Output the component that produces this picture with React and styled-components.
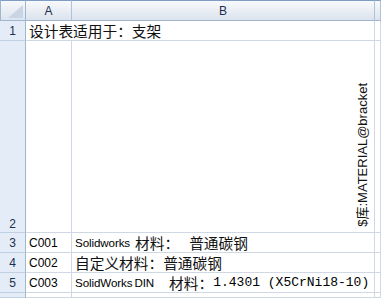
import React from "react";
import styled, { createGlobalStyle } from "styled-components";

const Global = createGlobalStyle`
  html, body {
    margin: 0;
    padding: 0;
    background: #ffffff;
  }
`;

const Sheet = styled.div`
  display: grid;
  grid-template-columns: 26px 46px 303px 1fr;
  grid-template-rows: 21px 20px 192px 20px 20px 20px 1fr;
  width: 381px;
  height: 298px;
  overflow: hidden;
  background: #ffffff;
  font-family: "Liberation Sans", Arial, sans-serif;
  color: #000000;
`;

const HeadBase = styled.div`
  box-sizing: border-box;
  display: flex;
  align-items: center;
  justify-content: center;
  font-size: 12px;
  color: #1c2f4d;
`;

const Corner = styled(HeadBase)`
  background: linear-gradient(#f6f8fb, #dde4ee);
  border-top: 1px solid #7e9cc4;
  border-left: 1px solid #9eb6ce;
  border-right: 1px solid #9eb6ce;
  border-bottom: 1px solid #9eb6ce;
  align-items: flex-end;
  justify-content: flex-end;
  padding: 0 2px 2px 0;
`;

const ColHead = styled(HeadBase)`
  background: linear-gradient(#f7f9fc, #dce3ed);
  border-top: 1px solid #7e9cc4;
  border-bottom: 1px solid #9eb6ce;
  border-right: 1px solid #b0c2d8;
`;

const RowHead = styled(HeadBase)`
  background: #e4ecf7;
  border-right: 1px solid #9eb6ce;
  border-bottom: 1px solid #c0cfe2;
  align-items: ${(p) => (p.$bottom ? "flex-end" : "center")};
  padding-bottom: ${(p) => (p.$bottom ? "1px" : "0")};
`;

const Cell = styled.div`
  box-sizing: border-box;
  display: flex;
  align-items: center;
  padding-left: 3px;
  white-space: nowrap;
  overflow: hidden;
  grid-column: ${(p) => (p.$span ? `span ${p.$span}` : "auto")};
  border-right: 1px solid #d0d7e5;
  border-bottom: 1px solid #d0d7e5;
  font-size: 12px;
`;

const TallCell = styled(Cell)`
  align-items: flex-end;
  justify-content: flex-end;
  padding: 0 4px 5px 0;
`;

const Cjk = styled.span`
  font-family: "Noto Sans CJK SC", sans-serif;
  font-size: 14.7px;
  color: #111111;
  margin-left: ${(p) => p.$gap || 0}px;
`;

const Latin = styled.span`
  font-family: "Liberation Sans", Arial, sans-serif;
  font-size: 11.6px;
  letter-spacing: -0.1px;
  margin-left: ${(p) => p.$gap || 0}px;
`;

const Mono = styled.span`
  font-family: "Liberation Mono", "Courier New", monospace;
  font-size: 13px;
`;

const Rotated = styled.div`
  writing-mode: vertical-rl;
  text-orientation: sideways;
  transform: rotate(180deg);
  font-family: "Liberation Sans", "Noto Sans CJK SC", sans-serif;
  font-size: 13px;
  line-height: 14px;
  color: #111111;
`;

function CornerMark() {
  return (
    <svg width="15" height="13" viewBox="0 0 15 13">
      <polygon points="15,0 15,13 0,13" fill="#c9d5e5" />
    </svg>
  );
}

export default function App() {
  return (
    <>
      <Global />
      <Sheet>
        <Corner>
          <CornerMark />
        </Corner>
        <ColHead>A</ColHead>
        <ColHead>B</ColHead>
        <ColHead />

        <RowHead>1</RowHead>
        <Cell $span={2}>
          <Cjk>设计表适用于：支架</Cjk>
        </Cell>
        <Cell />

        <RowHead $bottom>2</RowHead>
        <Cell />
        <TallCell>
          <Rotated>$库:MATERIAL@bracket</Rotated>
        </TallCell>
        <Cell />

        <RowHead>3</RowHead>
        <Cell>C001</Cell>
        <Cell>
          <Latin>Solidworks</Latin>
          <Cjk $gap={5}>材料：</Cjk>
          <Cjk $gap={10}>普通碳钢</Cjk>
        </Cell>
        <Cell />

        <RowHead>4</RowHead>
        <Cell>C002</Cell>
        <Cell>
          <Cjk>自定义材料：普通碳钢</Cjk>
        </Cell>
        <Cell />

        <RowHead>5</RowHead>
        <Cell>C003</Cell>
        <Cell>
          <Latin>SolidWorks</Latin>
          <Latin $gap={2}>DIN</Latin>
          <Cjk $gap={15}>材料：</Cjk>
          <Mono>1.4301 (X5CrNi18-10)</Mono>
        </Cell>
        <Cell />

        <RowHead />
        <Cell />
        <Cell />
        <Cell />
      </Sheet>
    </>
  );
}
